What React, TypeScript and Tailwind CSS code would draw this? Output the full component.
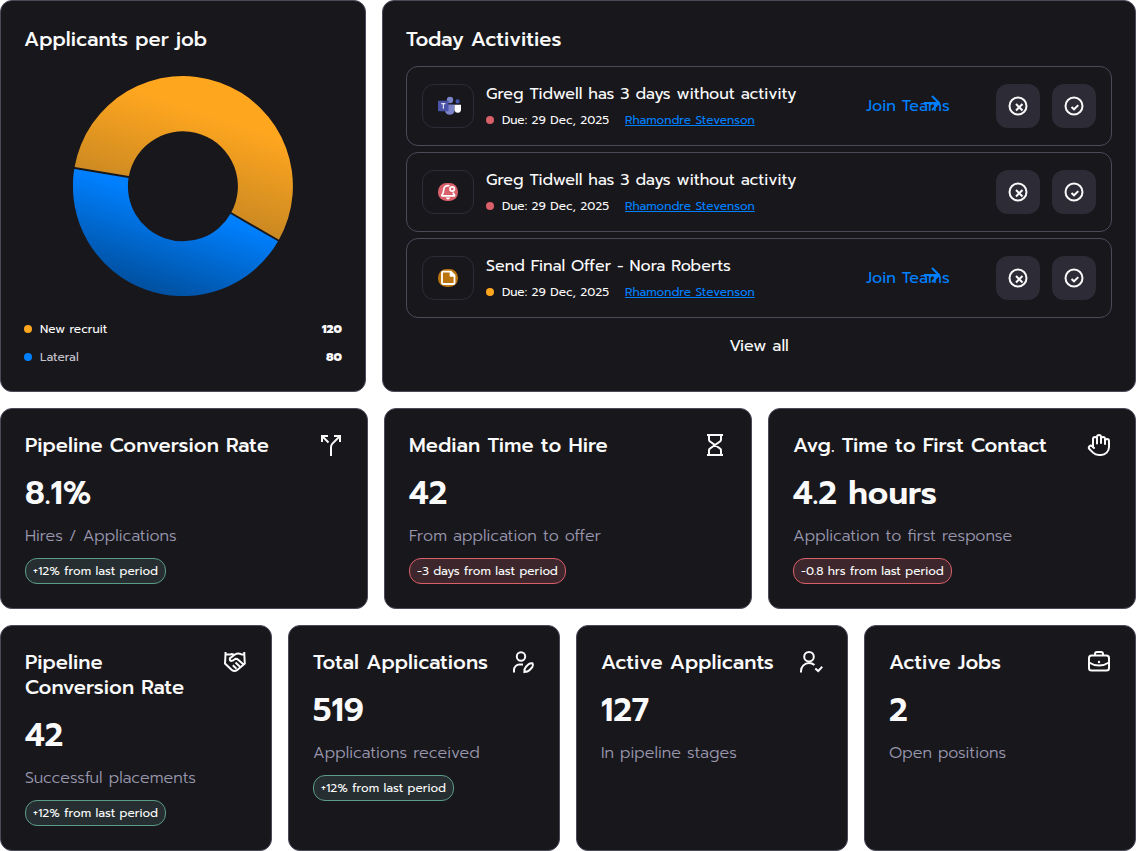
import React from "react";
import { Hand } from "lucide-react";

type Kpi = {
  title: string;
  value: string;
  caption: string;
  delta?: string;
  down?: boolean;
  icon: React.ReactNode;
};

const LineIcon = ({ children }: { children: React.ReactNode }) => (
  <svg
    viewBox="0 0 24 24"
    fill="none"
    stroke="currentColor"
    strokeWidth="2"
    className="size-6 shrink-0"
    aria-hidden="true"
  >
    {children}
  </svg>
);

const SplitIcon = () => (
  <LineIcon>
    <path d="M3 9V3h6M3 3l6.5 6.5M15 3h6v6M21 3l-7.6 7.6Q12 12 12 14.2V23" />
  </LineIcon>
);

const HourglassIcon = () => (
  <LineIcon>
    <path d="M4 2h16M4 22h16M6 2v4.5q0 1 .7 1.700l10.600 7.600q.7.7.7 1.700V22M18 2v4.500q0 1-.7 1.700L6.700 15.800q-.7.7-.7 1.700V22" />
  </LineIcon>
);

const HandshakeIcon = () => (
  <LineIcon>
    <path d="M2.5 2v2.5L2 13.5l7 6.7q2.500 1.600 5 0l7.800-6.700-.5-9V2" />
    <path d="M2.5 4.200q3.500.8 6.500-.2l2 .7M21.800 4.500q-2 .3-3.800-.3-3-1.700-6 .3L7 8.200q-.8 2.200 1.300 2.800 1.700 0 4.200-2.200 1.800 0 3 1.200l5 4.500" />
    <path d="M12.5 12.5l4.500 4.300M9.800 15.300l3.700 3.500" />
  </LineIcon>
);

const UserEditIcon = () => (
  <LineIcon>
    <circle cx="10" cy="6.5" r="4.2" />
    <path d="M3 22.5V20a5.5 5.5 0 0 1 5.5-5.5h3.5" />
    <path d="M13.4 22.1q-.2-3.5 1.6-5.3l2.8-2.7q1.6-1.3 3.7-.8 1.2 2.2-.3 4l-2.8 2.9q-1.6 1.7-5 1.9z" />
  </LineIcon>
);

const UserCheckIcon = () => (
  <LineIcon>
    <circle cx="10" cy="6.7" r="4.8" />
    <path d="M2 22.5v-1.5a8 8 0 0 1 8-8q3 0 5.5 2M16.3 18.5l2.9 2.6 4-4.3" />
  </LineIcon>
);

const BriefcaseIcon = () => (
  <LineIcon>
    <rect x="2" y="5.5" width="20" height="15" rx="2.5" />
    <path d="M8 5.500V4q0-2 2-2h4q2 0 2 2v1.500M2 12.500q4.500 3 10 3t10-3" />
    <circle cx="12" cy="12" r="1.2" fill="currentColor" stroke="none" />
  </LineIcon>
);

const TeamsIcon = () => (
  <svg viewBox="0 0 24 20" className="h-5 w-6" aria-hidden="true">
    <circle cx="12" cy="4" r="3.2" fill="#7b83c9" />
    <circle cx="19.6" cy="5.4" r="2.1" fill="#4455ae" />
    <path d="M7 8.5h9.500v6.200a4.800 4.800 0 0 1-9.500 0z" fill="#7b83c9" />
    <path d="M16.5 8.8h6.500v4.700a3.300 3.300 0 0 1-6.500.8z" fill="#fff" />
    <rect x="0" y="4.7" width="10.5" height="10.5" rx=".6" fill="#4b53a8" />
    <path d="M3.2 7.700h4.200M5.300 7.700v5" stroke="#fff" />
  </svg>
);

const BellIcon = () => (
  <svg viewBox="0 0 20 18" fill="none" className="h-[18px] w-5" aria-hidden="true">
    <rect width="20" height="18" rx="8.5" fill="#d95f6b" />
    <path
      d="M11.5 2.8C8 1.9 5.8 4 5.7 6.8c0 2.600-.5 3.700-1.700 5.200v.8h12.500v-.8q-1.200-1.200-1.400-2.500"
      stroke="#fff"
      strokeWidth="1.7"
      strokeLinejoin="round"
    />
    <circle cx="14.2" cy="6" r="2.2" stroke="#fff" strokeWidth="1.7" />
    <path d="M8 14.500h4q-.3 2-2 2t-2-2z" fill="#fff" />
  </svg>
);

const NoteIcon = () => (
  <svg viewBox="0 0 20 18" fill="none" className="h-[18px] w-5" aria-hidden="true">
    <rect width="20" height="18" rx="8.5" fill="#b9730f" />
    <path
      d="M4.5 2.7h8.300l3.700 3.800v7.500q0 1-1 1h-10q-1.500 0-1.500-1V3.700q0-1 .5-1z"
      stroke="#fff"
      strokeWidth="1.8"
      strokeLinejoin="round"
    />
    <path d="M11.6 2.500h1.500l3.600 3.700v1.500h-4q-1.100 0-1.100-1z" fill="#fff" />
  </svg>
);

const activities = [
  { title: "Greg Tidwell has 3 days without activity", icon: <TeamsIcon />, dot: "bg-[#d95f69]", join: true },
  { title: "Greg Tidwell has 3 days without activity", icon: <BellIcon />, dot: "bg-[#d95f69]", join: false },
  { title: "Send Final Offer - Nora Roberts", icon: <NoteIcon />, dot: "bg-[#ffa61f]", join: true },
];

const rates: Kpi[] = [
  {
    title: "Pipeline Conversion Rate",
    value: "8.1%",
    caption: "Hires / Applications",
    delta: "+12% from last period",
    icon: <SplitIcon />,
  },
  {
    title: "Median Time to Hire",
    value: "42",
    caption: "From application to offer",
    delta: "-3 days from last period",
    down: true,
    icon: <HourglassIcon />,
  },
  {
    title: "Avg. Time to First Contact",
    value: "4.2 hours",
    caption: "Application to first response",
    delta: "-0.8 hrs from last period",
    down: true,
    icon: <Hand className="size-6 shrink-0" />,
  },
];

const totals: Kpi[] = [
  {
    title: "Pipeline Conversion Rate",
    value: "42",
    caption: "Successful placements",
    delta: "+12% from last period",
    icon: <HandshakeIcon />,
  },
  {
    title: "Total Applications",
    value: "519",
    caption: "Applications received",
    delta: "+12% from last period",
    icon: <UserEditIcon />,
  },
  { title: "Active Applicants", value: "127", caption: "In pipeline stages", icon: <UserCheckIcon /> },
  { title: "Active Jobs", value: "2", caption: "Open positions", icon: <BriefcaseIcon /> },
];

const KpiCard = ({ kpi }: { kpi: Kpi }) => (
  <div className="rounded-xl border border-[#4b4a5b] bg-[#18171c] p-6">
    <div className="flex items-start justify-between gap-4">
      <h2 className="text-xl leading-[25px] font-medium">{kpi.title}</h2>
      {kpi.icon}
    </div>
    <p className="mt-4 text-[32px] leading-10 font-semibold">{kpi.value}</p>
    <p className="mt-3 text-base leading-5 font-light text-[#9a98ae]">{kpi.caption}</p>
    {kpi.delta && (
      <span
        className={`${
          kpi.down ? "border-[#d95f69] bg-[#3d272d]" : "border-[#5a9c85] bg-[#262e31]"
        } mt-3 flex h-[26px] w-fit items-center rounded-xl border px-[7px] text-xs`}
      >
        {kpi.delta}
      </span>
    )}
  </div>
);

const Donut = () => (
  <svg viewBox="0 0 220 220" className="mx-auto size-[220px]" role="img" aria-label="Applicants per job">
    <defs>
      <linearGradient id="recruit" gradientUnits="userSpaceOnUse" x1="127" y1="35" x2="96" y2="130">
        <stop stopColor="#ffa61f" />
        <stop offset="1" stopColor="#c98822" />
      </linearGradient>
      <linearGradient id="lateral" gradientUnits="userSpaceOnUse" x1="110" y1="129" x2="81" y2="216">
        <stop stopColor="#0080ff" />
        <stop offset="1" stopColor="#0050a0" />
      </linearGradient>
    </defs>
    <path d="M1.4 92A110 110 0 1 1 205.5 164.5L158 137A55 55 0 1 0 55.7 101z" fill="url(#recruit)" />
    <path d="M205.5 164.5A110 110 0 0 1 1.4 92L55.7 101A55 55 0 0 0 158 137z" fill="url(#lateral)" />
    <path d="M0 91.8L57 101.2M157 136.5L208 166" stroke="#18171c" strokeWidth="2" />
  </svg>
);

const ApplicantsCard = () => (
  <section className="rounded-xl border border-[#4b4a5b] bg-[#18171c] px-[23px] pt-[26px] pb-6">
    <h2 className="mb-6 text-xl leading-[25px] font-medium">Applicants per job</h2>
    <Donut />
    <ul className="mt-[23px] flex flex-col gap-2 text-xs leading-5">
      <li className="flex items-center gap-2">
        <span className="size-2 rounded-full bg-[#ffa61f]" />
        <span>New recruit</span>
        <span className="ml-auto font-extrabold">120</span>
      </li>
      <li className="flex items-center gap-2">
        <span className="size-2 rounded-full bg-[#0080ff]" />
        <span className="text-[#c4c3cc]">Lateral</span>
        <span className="ml-auto font-extrabold">80</span>
      </li>
    </ul>
  </section>
);

const ActivitiesCard = () => (
  <section className="min-w-0 rounded-xl border border-[#4b4a5b] bg-[#18171c] px-[23px] pt-[26px] pb-6">
    <h2 className="mb-[14px] text-xl leading-[25px] font-medium">Today Activities</h2>
    <ul className="flex flex-col gap-[6px]">
      {activities.map((activity, index) => (
        <li
          key={index}
          className="flex h-20 items-center gap-3 rounded-xl border border-[#4b4a5b] px-[15px]"
        >
          <div className="flex h-11 w-[52px] shrink-0 items-center rounded-xl border border-[#2d2c36] pl-[15px]">
            {activity.icon}
          </div>
          <div className="min-w-0">
            <h3 className="text-base leading-5">{activity.title}</h3>
            <div className="mt-2 flex items-center text-xs leading-4">
              <span className={`${activity.dot} mr-2 size-2 rounded-full`} />
              <span>Due: 29 Dec, 2025</span>
              <a href="#candidate" className="ml-4 text-[#0080ff] underline">
                Rhamondre Stevenson
              </a>
            </div>
          </div>
          <div className="ml-auto flex shrink-0 items-center gap-3">
            {activity.join && (
              <a href="#teams" className="relative w-[118px] text-base leading-5 text-[#0080ff]">
                Join Teams
                <svg
                  viewBox="0 0 16 16"
                  fill="none"
                  stroke="currentColor"
                  strokeWidth="2"
                  className="absolute -top-px left-[58px] size-4"
                  aria-hidden="true"
                >
                  <path d="M0 8h14.5M8 1l7 7-7 7" />
                </svg>
              </a>
            )}
            <button
              aria-label="Dismiss"
              className="flex size-11 cursor-pointer items-center justify-center rounded-xl bg-[#2d2c36]"
            >
              <svg viewBox="0 0 20 20" fill="none" stroke="currentColor" strokeWidth="2" className="size-5">
                <circle cx="10" cy="10" r="8.5" />
                <path d="M8 8l6.5 6.5M14.5 8L8 14.5" />
              </svg>
            </button>
            <button
              aria-label="Complete"
              className="flex size-11 cursor-pointer items-center justify-center rounded-xl bg-[#2d2c36]"
            >
              <svg viewBox="0 0 20 20" fill="none" stroke="currentColor" strokeWidth="2" className="size-5">
                <circle cx="10" cy="10" r="8.5" />
                <path d="M7.5 11l2.500 2.300 4.300-4.200" />
              </svg>
            </button>
          </div>
        </li>
      ))}
    </ul>
    <button className="mx-auto mt-[18px] block cursor-pointer text-base leading-5">View all</button>
  </section>
);

const App = () => {
  return (
    <main className="flex flex-col gap-4 bg-white font-[Prompt,Inter,sans-serif] text-[#fafafa]">
      <div className="grid grid-cols-[366fr_754fr] gap-4">
        <ApplicantsCard />
        <ActivitiesCard />
      </div>
      <div className="grid grid-cols-3 gap-4">
        {rates.map((kpi) => (
          <KpiCard key={kpi.title} kpi={kpi} />
        ))}
      </div>
      <div className="grid grid-cols-4 gap-4">
        {totals.map((kpi) => (
          <KpiCard key={kpi.title} kpi={kpi} />
        ))}
      </div>
    </main>
  );
};

export default App;
